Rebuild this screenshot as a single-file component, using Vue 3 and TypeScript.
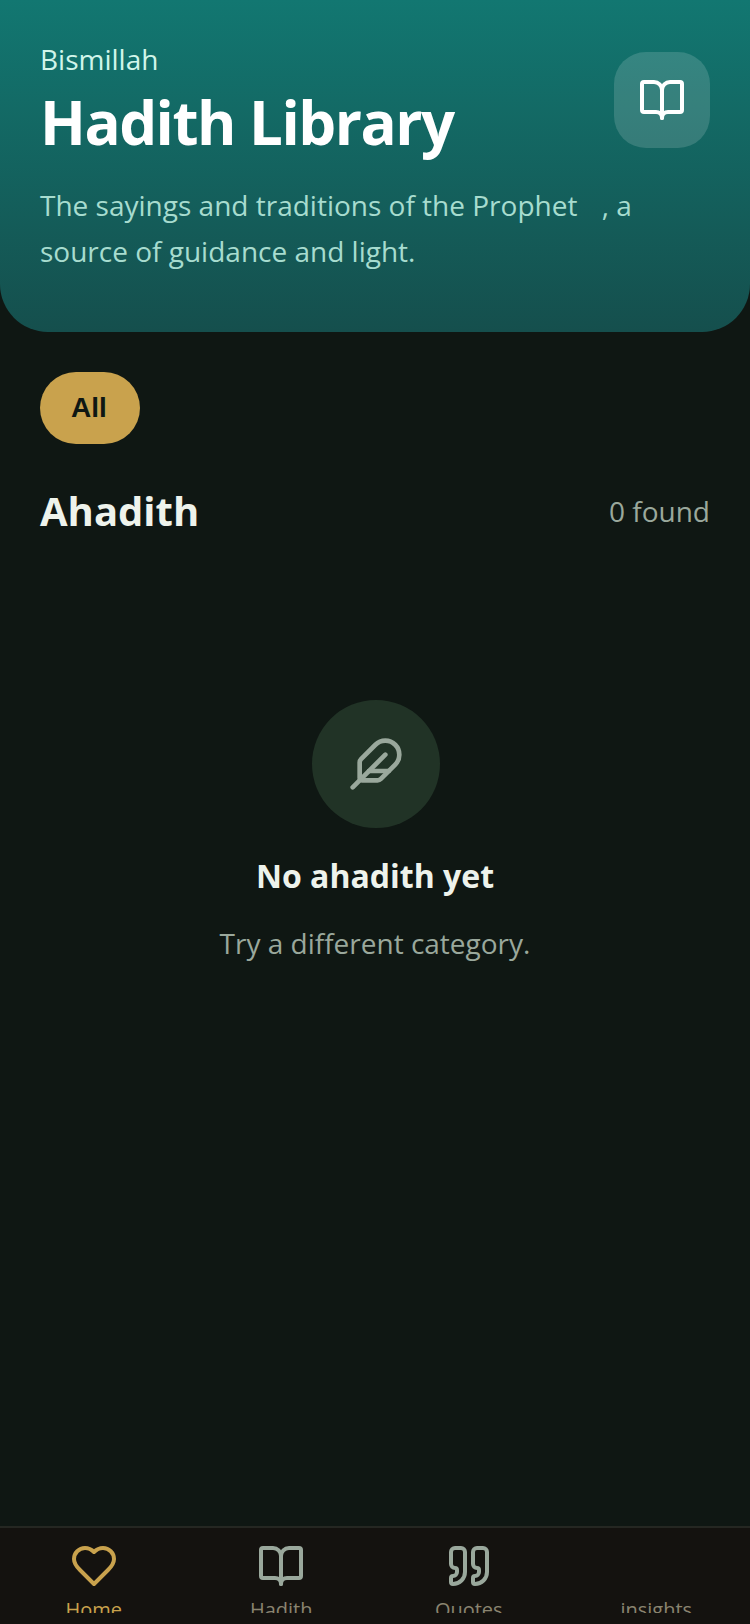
<script setup lang="ts">
const tabs = [
  { label: "Home", icon: "heart", active: true },
  { label: "Hadith", icon: "book", active: false },
  { label: "Quotes", icon: "quote", active: false },
  { label: "insights", icon: "", active: false },
];
</script>

<template>
  <div class="screen">
    <header class="hero">
      <div class="hero-text">
        <p class="greeting">Bismillah</p>
        <h1 class="title">Hadith Library</h1>
      </div>
      <div class="hero-badge">
        <svg class="icon badge-icon" viewBox="0 0 24 24">
          <path d="M12 7v14" />
          <path d="M3 18a1 1 0 0 1-1-1V4a1 1 0 0 1 1-1h5a4 4 0 0 1 4 4 4 4 0 0 1 4-4h5a1 1 0 0 1 1 1v13a1 1 0 0 1-1 1h-6a3 3 0 0 0-3 3 3 3 0 0 0-3-3z" />
        </svg>
      </div>
      <p class="desc">The sayings and traditions of the Prophet <span class="honorific"></span>, a source of guidance and light.</p>
    </header>

    <main class="content">
      <div class="filters">
        <button type="button" class="chip">All</button>
      </div>

      <div class="section-head">
        <h2 class="section-title">Ahadith</h2>
        <span class="count">0 found</span>
      </div>

      <div class="empty">
        <div class="empty-circle">
          <svg class="icon empty-icon" viewBox="0 0 24 24">
            <path d="M12.67 19a2 2 0 0 0 1.416-.588l6.154-6.172a6 6 0 0 0-8.49-8.49L5.586 9.914A2 2 0 0 0 5 11.328V18a1 1 0 0 0 1 1z" />
            <path d="M16 8 2 22" />
            <path d="M17.5 15H9" />
          </svg>
        </div>
        <h3 class="empty-title">No ahadith yet</h3>
        <p class="empty-sub">Try a different category.</p>
      </div>
    </main>

    <nav class="tabbar">
      <div v-for="t in tabs" :key="t.label" class="tab" :class="{ active: t.active }">
        <div class="tab-icon">
          <svg v-if="t.icon === 'heart'" class="icon" viewBox="0 0 24 24">
            <path d="M19 14c1.49-1.46 3-3.21 3-5.5A5.5 5.5 0 0 0 16.5 3c-1.76 0-3 .5-4.5 2-1.5-1.5-2.74-2-4.5-2A5.5 5.5 0 0 0 2 8.5c0 2.3 1.5 4.05 3 5.5l7 7Z" />
          </svg>
          <svg v-else-if="t.icon === 'book'" class="icon" viewBox="0 0 24 24">
            <path d="M12 7v14" />
            <path d="M3 18a1 1 0 0 1-1-1V4a1 1 0 0 1 1-1h5a4 4 0 0 1 4 4 4 4 0 0 1 4-4h5a1 1 0 0 1 1 1v13a1 1 0 0 1-1 1h-6a3 3 0 0 0-3 3 3 3 0 0 0-3-3z" />
          </svg>
          <svg v-else-if="t.icon === 'quote'" class="icon" viewBox="0 0 24 24">
            <path d="M16 3a2 2 0 0 0-2 2v6a2 2 0 0 0 2 2 1 1 0 0 1 1 1v1a2 2 0 0 1-2 2 1 1 0 0 0-1 1v2a1 1 0 0 0 1 1 6 6 0 0 0 6-6V5a2 2 0 0 0-2-2z" />
            <path d="M5 3a2 2 0 0 0-2 2v6a2 2 0 0 0 2 2 1 1 0 0 1 1 1v1a2 2 0 0 1-2 2 1 1 0 0 0-1 1v2a1 1 0 0 0 1 1 6 6 0 0 0 6-6V5a2 2 0 0 0-2-2z" />
          </svg>
        </div>
        <span class="tab-label">{{ t.label }}</span>
      </div>
    </nav>
  </div>
</template>

<style>
html,
body {
  margin: 0;
  background: #0f1713;
}
</style>

<style scoped>
.screen {
  width: 750px;
  height: 1624px;
  display: flex;
  flex-direction: column;
  background: #0f1713;
  font-family: "Open Sans", sans-serif;
  overflow: hidden;
}

.icon {
  display: block;
  width: 48px;
  height: 48px;
  fill: none;
  stroke: currentColor;
  stroke-width: 2;
  stroke-linecap: round;
  stroke-linejoin: round;
}

.hero {
  height: 332px;
  box-sizing: border-box;
  padding: 39px 40px 0;
  display: grid;
  grid-template-columns: 1fr 96px;
  grid-template-rows: auto 1fr;
  background: linear-gradient(180deg, #127771 0%, #154f4d 100%);
  border-radius: 0 0 48px 48px;
}

.greeting {
  margin: 0;
  font-size: 28px;
  line-height: 40px;
  color: #d1f5ea;
}

.title {
  margin: 5px 0 0;
  font-size: 60px;
  line-height: 76px;
  font-weight: 700;
  letter-spacing: -1.5px;
  color: #ffffff;
}

.hero-badge {
  width: 96px;
  height: 96px;
  margin-top: 13px;
  border-radius: 32px;
  background: rgba(255, 255, 255, 0.15);
  color: #ffffff;
  display: flex;
  align-items: center;
  justify-content: center;
}

.desc {
  grid-column: 1 / -1;
  margin: 22px 0 0;
  font-size: 28px;
  line-height: 46px;
  color: #a7dccf;
}

.honorific {
  display: inline-block;
  width: 17px;
}

.content {
  flex: 1;
  padding: 40px 40px 0;
}

.filters {
  display: flex;
}

.chip {
  width: 100px;
  height: 72px;
  padding: 0 2px 0 0;
  border: none;
  border-radius: 36px;
  background: #c9a24d;
  color: #0f1713;
  font-family: "Liberation Sans", sans-serif;
  font-size: 28px;
  font-weight: 700;
}

.section-head {
  display: flex;
  align-items: center;
  justify-content: space-between;
  margin-top: 38px;
  height: 56px;
}

.section-title {
  margin: 0;
  font-size: 40px;
  font-weight: 700;
  color: #eef3ec;
}

.count {
  padding-top: 2px;
  font-size: 28px;
  color: #9aa89c;
}

.empty {
  display: flex;
  flex-direction: column;
  align-items: center;
  margin-top: 162px;
}

.empty-circle {
  width: 128px;
  height: 128px;
  margin-left: 2px;
  border-radius: 50%;
  background: #213326;
  color: #9aa89c;
  display: flex;
  align-items: center;
  justify-content: center;
}

.empty-icon {
  width: 56px;
  height: 56px;
}

.empty-title {
  margin: 26px 0 0;
  font-size: 32px;
  line-height: 44px;
  font-weight: 700;
  color: #eef3ec;
}

.empty-sub {
  margin: 23px 0 0;
  font-size: 28px;
  line-height: 44px;
  color: #9aa89c;
}

.tabbar {
  height: 98px;
  box-sizing: border-box;
  padding-bottom: 11px;
  display: grid;
  grid-template-columns: repeat(4, 1fr);
  background: #14120f;
  border-top: 2px solid #252722;
}

.tab {
  display: flex;
  flex-direction: column;
  align-items: center;
  overflow: hidden;
  color: #9aa89c;
}

.tab.active {
  color: #c9a24d;
}

.tab-icon {
  flex-shrink: 0;
  height: 48px;
  margin-top: 14px;
}

.tab-label {
  flex-shrink: 0;
  margin-top: 6px;
  font-size: 20px;
  line-height: 28px;
  color: #8a8470;
}

.tab.active .tab-label {
  color: #c9a24d;
}
</style>
